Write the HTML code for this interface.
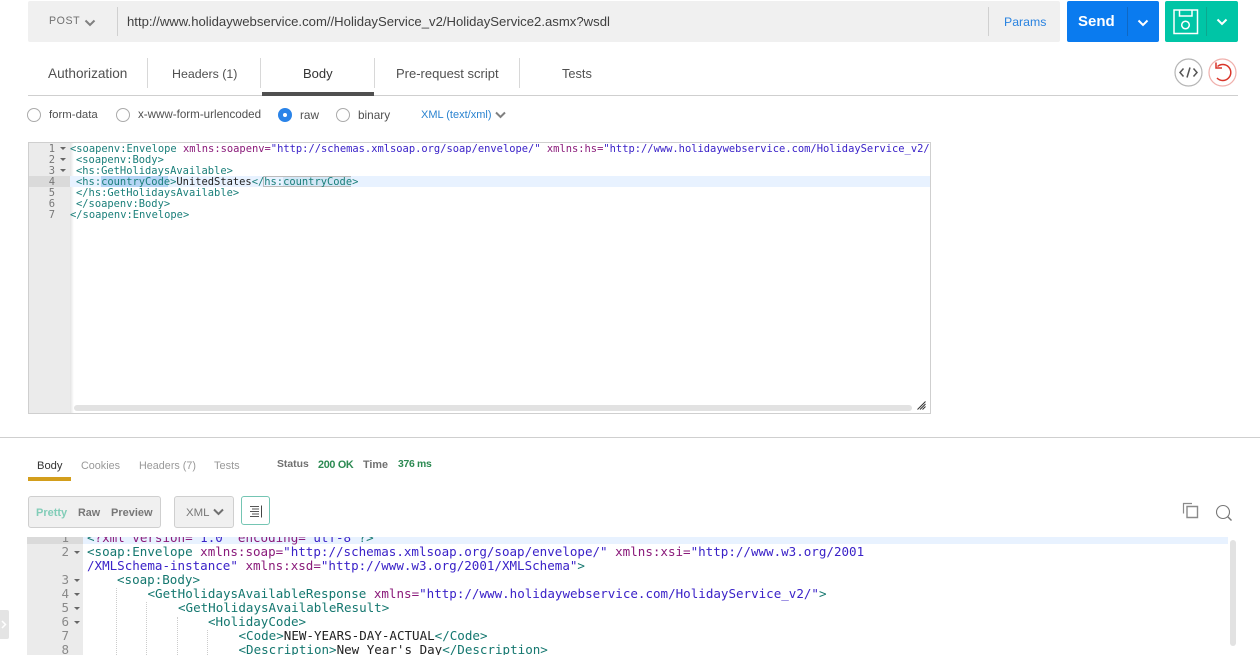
<!DOCTYPE html>
<html><head><meta charset="utf-8">
<style>
html,body{margin:0;padding:0;background:#fff}
#p{position:relative;width:1260px;height:655px;overflow:hidden;background:#fff;font-family:"Liberation Sans",sans-serif}
#p div,#p span.a,#p svg{position:absolute}
.t{position:absolute;white-space:nowrap;line-height:16px}
.m{font-family:"DejaVu Sans Mono","Liberation Mono",monospace;white-space:pre;position:absolute}
.u{font-size:10.43px;line-height:11px;color:#1a7f7a;left:70px}
.l{font-size:12.54px;line-height:14px;color:#14776f;left:87px}
.n{font-family:"DejaVu Sans Mono",monospace;position:absolute;text-align:right;color:#777}
.p{color:#8a1a7a}.s{color:#3a22c8}.b{color:#222}
.g{width:0;height:0;border-left:3px solid transparent;border-right:3px solid transparent;border-top:3px solid #666}
.r{width:12px;height:12px;border:1px solid #aaa;border-radius:50%;box-sizing:content-box;background:#fff}
.d{width:1px;background:#d8d8d8}
.i{border-left:1px dotted #ccc;width:0}
</style></head>
<body><div id="p">

<!-- URL bar -->
<div style="left:28px;top:1px;width:1032px;height:41px;background:#f0f0f0;border-radius:2px"></div>
<div class="t" style="left:49px;top:13px;font-size:10.6px;color:#707070;letter-spacing:.6px">POST</div>
<svg style="left:84px;top:19px" width="12" height="8" viewBox="0 0 12 8"><path d="M1.5 1.5L6 6L10.5 1.5" fill="none" stroke="#808080" stroke-width="2"/></svg>
<div style="left:117px;top:7px;width:1px;height:29px;background:#d0d0d0"></div>
<div class="t" style="left:127px;top:14px;font-size:13.13px;color:#404040">http://www.holidaywebservice.com//HolidayService_v2/HolidayService2.asmx?wsdl</div>
<div style="left:988px;top:7px;width:1px;height:29px;background:#d0d0d0"></div>
<div class="t" style="left:1004px;top:14px;font-size:12.3px;color:#2a83e0">Params</div>

<!-- Send -->
<div style="left:1067px;top:1px;width:92px;height:41px;background:#0a7bef;border-radius:2px"></div>
<div class="t" style="left:1078px;top:14px;font-size:15px;font-weight:bold;color:#fff">Send</div>
<div style="left:1127px;top:7px;width:1px;height:29px;background:#0f68c4"></div>
<svg style="left:1137px;top:19px" width="12" height="8" viewBox="0 0 12 8"><path d="M1.5 1.5L6 6L10.5 1.5" fill="none" stroke="#fff" stroke-width="2"/></svg>

<!-- Save -->
<div style="left:1165px;top:1px;width:73px;height:41px;background:#00c5a6;border-radius:2px"></div>
<svg style="left:1172px;top:8px" width="27" height="27" viewBox="0 0 27 27" fill="none" stroke="#fff" stroke-width="1.5"><path d="M2 2H25.5V25.5H2Z"/><path d="M7.5 2V8H20V2"/><circle cx="13.5" cy="17" r="3.8"/></svg>
<div style="left:1206px;top:7px;width:1px;height:29px;background:#0ca88f"></div>
<svg style="left:1216px;top:18px" width="12" height="8" viewBox="0 0 12 8"><path d="M1.5 1.5L6 6L10.5 1.5" fill="none" stroke="#fff" stroke-width="2"/></svg>

<!-- Tabs -->
<div class="t" style="left:48px;top:66px;font-size:13.6px;color:#505050">Authorization</div>
<div class="d" style="left:147px;top:58px;height:30px"></div>
<div class="t" style="left:172px;top:66px;font-size:12.4px;color:#505050">Headers (1)</div>
<div class="d" style="left:260px;top:58px;height:30px"></div>
<div class="t" style="left:303px;top:66px;font-size:13px;color:#333">Body</div>
<div class="d" style="left:374px;top:58px;height:30px"></div>
<div class="t" style="left:396px;top:66px;font-size:13px;color:#505050">Pre-request script</div>
<div class="d" style="left:519px;top:58px;height:30px"></div>
<div class="t" style="left:562px;top:66px;font-size:12.8px;color:#505050">Tests</div>
<div style="left:28px;top:95px;width:1210px;height:1px;background:#cfcfcf"></div>
<div style="left:262px;top:92px;width:112px;height:4px;background:#505050"></div>

<svg style="left:1174px;top:58px" width="29" height="29" viewBox="0 0 29 29" fill="none"><circle cx="14.5" cy="14.5" r="13.5" stroke="#b5b5b5" stroke-width="1.2"/><path d="M9.5 10.5L6 14.5L9.5 18.5M19.5 10.5L23 14.5L19.5 18.5M16 9.5L13 19.5" stroke="#555" stroke-width="1.5"/></svg>
<svg style="left:1208px;top:58px" width="29" height="29" viewBox="0 0 29 29" fill="none"><circle cx="14.5" cy="14.5" r="13.5" stroke="#f0b0ac" stroke-width="1.2"/><path d="M9.5 8.5A8 8 0 1 1 9 20" stroke="#d9352a" stroke-width="1.5"/><path d="M8 4.5V10H14" stroke="#d9352a" stroke-width="1.5"/></svg>

<!-- Body options -->
<div class="r" style="left:27px;top:108px"></div>
<div class="t" style="left:49px;top:107px;font-size:11.4px;color:#505050">form-data</div>
<div class="r" style="left:116px;top:108px"></div>
<div class="t" style="left:138px;top:107px;font-size:11.6px;color:#505050">x-www-form-urlencoded</div>
<div style="left:278px;top:108px;width:14px;height:14px;border-radius:50%;background:#2a83e8"></div>
<div style="left:283px;top:113px;width:4px;height:4px;border-radius:50%;background:#fff"></div>
<div class="t" style="left:300px;top:107px;font-size:11.8px;color:#505050">raw</div>
<div class="r" style="left:336px;top:108px"></div>
<div class="t" style="left:358px;top:107px;font-size:11.8px;color:#505050">binary</div>
<div class="t" style="left:421px;top:107px;font-size:11px;color:#2a83d0">XML (text/xml)</div>
<svg style="left:495px;top:111px" width="11" height="8" viewBox="0 0 11 8"><path d="M1 1.5L5.5 6L10 1.5" fill="none" stroke="#808080" stroke-width="2"/></svg>

<!-- Request editor -->
<div style="left:28px;top:142px;width:903px;height:272px;border:1px solid #cfcfcf;box-sizing:border-box;background:#fff"></div>
<div style="left:29px;top:143px;width:41px;height:270px;background:#ebebeb"></div>
<div style="left:70px;top:143px;width:4px;height:270px;background:linear-gradient(90deg,#e4e4e4,#fff)"></div>
<div style="left:29px;top:176px;width:41px;height:11px;background:#dadada"></div>
<div style="left:70px;top:176px;width:860px;height:11px;background:#e8f2ff"></div>
<div style="left:101px;top:176px;width:67px;height:11px;background:#b5d5f5"></div>
<div style="left:263px;top:176px;width:88px;height:11px;background:#e8f2ff;border:1px solid #bbb;box-sizing:border-box"></div>
<div style="left:283px;top:177px;width:68px;height:9px;background:#d2e6f5"></div>

<div class="n" style="left:29px;top:144px;width:26px;font-size:10.43px;line-height:11px">1<br>2<br>3<br>4<br>5<br>6<br>7</div>
<div class="g" style="left:60px;top:147px"></div>
<div class="g" style="left:60px;top:158px"></div>
<div class="g" style="left:60px;top:169px"></div>

<div style="left:70px;top:144px;width:860px;height:80px;overflow:hidden">
<div class="m u" style="left:0;top:0">&lt;soapenv:Envelope <span class="p">xmlns:soapenv=</span><span class="s">"http://schemas.xmlsoap.org/soap/envelope/"</span> <span class="p">xmlns:hs=</span><span class="s">"http://www.holidaywebservice.com/HolidayService_v2/"</span>&gt;</div>
<div class="m u" style="left:6px;top:11px">&lt;soapenv:Body&gt;</div>
<div class="m u" style="left:6px;top:22px">&lt;hs:GetHolidaysAvailable&gt;</div>
<div class="m u" style="left:6px;top:33px">&lt;hs:countryCode&gt;<span class="b">UnitedStates</span>&lt;/hs:countryCode&gt;</div>
<div class="m u" style="left:6px;top:44px">&lt;/hs:GetHolidaysAvailable&gt;</div>
<div class="m u" style="left:6px;top:55px">&lt;/soapenv:Body&gt;</div>
<div class="m u" style="left:0;top:66px">&lt;/soapenv:Envelope&gt;</div>
</div>

<div style="left:74px;top:405px;width:838px;height:6px;border-radius:3px;background:#e2e2e2"></div>
<svg style="left:917px;top:401px" width="9" height="9" viewBox="0 0 9 9"><path d="M8.5 0.5L0.5 8.5M8.5 3L3 8.5M8.5 5.5L5.5 8.5" stroke="#333" stroke-width="1"/></svg>

<!-- Divider -->
<div style="left:0;top:437px;width:1260px;height:1px;background:#cfcfcf"></div>

<!-- Response tabs -->
<div class="t" style="left:37px;top:458px;font-size:11.2px;color:#333">Body</div>
<div class="t" style="left:81px;top:458px;font-size:10.8px;color:#999">Cookies</div>
<div class="t" style="left:139px;top:458px;font-size:10.8px;color:#999">Headers (7)</div>
<div class="t" style="left:214px;top:458px;font-size:11px;color:#999">Tests</div>
<div style="left:28px;top:477px;width:43px;height:4px;background:#d39e1c"></div>
<div class="t" style="left:277px;top:457px;font-size:10.4px;font-weight:bold;color:#707070">Status</div>
<div class="t" style="left:318px;top:457px;font-size:10.8px;font-weight:bold;color:#2c8a52;letter-spacing:-.3px">200 OK</div>
<div class="t" style="left:363px;top:457px;font-size:10.8px;font-weight:bold;color:#707070">Time</div>
<div class="t" style="left:398px;top:457px;font-size:10.4px;font-weight:bold;color:#2c8a52;letter-spacing:-.3px">376 ms</div>

<!-- Response toolbar -->
<div style="left:28px;top:496px;width:133px;height:32px;background:#f0f0f0;border:1px solid #cfcfcf;border-radius:3px;box-sizing:border-box"></div>
<div class="t" style="left:36px;top:505px;font-size:11px;font-weight:bold;color:#82cdb8">Pretty</div>
<div class="t" style="left:78px;top:505px;font-size:10.8px;font-weight:bold;color:#777">Raw</div>
<div class="t" style="left:111px;top:505px;font-size:11px;font-weight:bold;color:#777">Preview</div>
<div style="left:174px;top:496px;width:60px;height:32px;background:#f0f0f0;border:1px solid #cfcfcf;border-radius:3px;box-sizing:border-box"></div>
<div class="t" style="left:186px;top:505px;font-size:11.4px;color:#777">XML</div>
<svg style="left:213px;top:508px" width="11" height="8" viewBox="0 0 11 8"><path d="M1 1.5L5.5 6L10 1.5" fill="none" stroke="#707070" stroke-width="2"/></svg>
<div style="left:241px;top:496px;width:29px;height:29px;border:1px solid #74c5b3;border-radius:3px;box-sizing:border-box;background:#fff"></div>
<svg style="left:249px;top:504px" width="14" height="15" viewBox="0 0 14 15" stroke="#555" stroke-width="1" fill="none"><path d="M1 2.5H10M3 5H10M1 7.5H10M3 10H10M1 12.5H10"/><path d="M12.5 1.5V13.5" stroke="#444"/></svg>
<svg style="left:1182px;top:502px" width="18" height="18" viewBox="0 0 18 18" fill="none" stroke="#8a8a8a" stroke-width="1.2"><path d="M1.5 11.5V1.5H10"/><path d="M5 4.5H15.5V15.5H5Z" stroke-width="1.4"/></svg>
<svg style="left:1215px;top:504px" width="18" height="18" viewBox="0 0 18 18" fill="none" stroke="#777" stroke-width="1.1"><circle cx="8" cy="8" r="6.5"/><path d="M12.5 12.5L16.5 16.5" stroke-width="1.4"/></svg>

<!-- Response editor -->
<div style="left:27px;top:537px;width:56px;height:118px;background:#ebebeb"></div>
<div style="left:27px;top:537px;width:56px;height:7px;background:#dadada"></div>
<div style="left:83px;top:537px;width:1145px;height:7px;background:#e8f2ff"></div>
<div style="left:1230px;top:540px;width:6px;height:106px;background:#e2e2e2;border-radius:3px"></div>

<div style="left:27px;top:537px;width:1200px;height:118px;overflow:hidden">
<div class="n" style="left:0;top:-6px;width:42px;font-size:12.54px;line-height:14px;color:#8a8a8a">1<br>2<br><br>3<br>4<br>5<br>6<br>7<br>8</div>
<div class="g" style="left:47px;top:14px"></div>
<div class="g" style="left:47px;top:42px"></div>
<div class="g" style="left:47px;top:56px"></div>
<div class="g" style="left:47px;top:70px"></div>
<div class="g" style="left:47px;top:84px"></div>
<div class="i" style="left:89px;top:51px;height:67px"></div>
<div class="i" style="left:119px;top:65px;height:53px"></div>
<div class="i" style="left:150px;top:80px;height:38px"></div>
<div class="i" style="left:180px;top:93px;height:25px"></div>
<div class="m l" style="left:60px;top:-6px">&lt;<span class="p">?xml version=</span><span class="s">"1.0"</span> <span class="p">encoding=</span><span class="s">"utf-8"</span>?&gt;</div>
<div class="m l" style="left:60px;top:8px">&lt;soap:Envelope <span class="p">xmlns:soap=</span><span class="s">"http://schemas.xmlsoap.org/soap/envelope/"</span> <span class="p">xmlns:xsi=</span><span class="s">"http://www.w3.org/2001</span></div>
<div class="m l" style="left:60px;top:22px"><span class="s">/XMLSchema-instance"</span> <span class="p">xmlns:xsd=</span><span class="s">"http://www.w3.org/2001/XMLSchema"</span>&gt;</div>
<div class="m l" style="left:90px;top:36px">&lt;soap:Body&gt;</div>
<div class="m l" style="left:120.5px;top:50px">&lt;GetHolidaysAvailableResponse <span class="p">xmlns=</span><span class="s">"http://www.holidaywebservice.com/HolidayService_v2/"</span>&gt;</div>
<div class="m l" style="left:151px;top:64px">&lt;GetHolidaysAvailableResult&gt;</div>
<div class="m l" style="left:181px;top:78px">&lt;HolidayCode&gt;</div>
<div class="m l" style="left:211.5px;top:92px">&lt;Code&gt;<span class="b">NEW-YEARS-DAY-ACTUAL</span>&lt;/Code&gt;</div>
<div class="m l" style="left:211.5px;top:106px">&lt;Description&gt;<span class="b">New Year's Day</span>&lt;/Description&gt;</div>
</div>

<!-- Side toggle -->
<div style="left:0;top:610px;width:9px;height:29px;background:#e4e4e4;border-radius:0 2px 2px 0"></div>
<svg style="left:1px;top:620px" width="6" height="9" viewBox="0 0 6 9"><path d="M1 1L4.5 4.5L1 8" fill="none" stroke="#fff" stroke-width="1.5"/></svg>

</div></body></html>
